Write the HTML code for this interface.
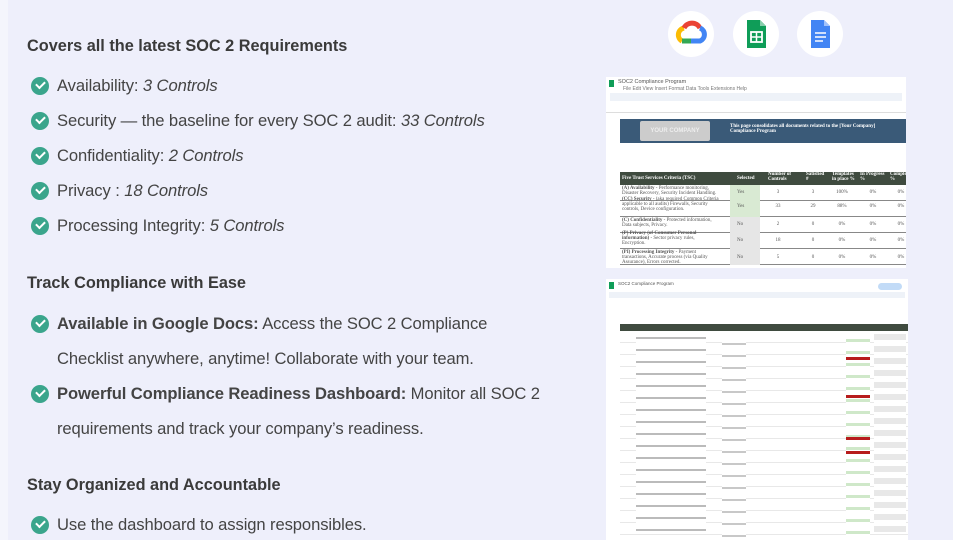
<!DOCTYPE html>
<html><head><meta charset="utf-8"><style>
*{margin:0;padding:0;box-sizing:border-box}
body{width:960px;height:540px;overflow:hidden;background:#fff;font-family:"Liberation Sans",sans-serif;position:relative}
.bg{position:absolute;left:0;top:0;width:953px;height:540px;background:#eeeffb}
.strip{position:absolute;left:0;top:0;width:8px;height:540px;background:#f4f5fc}
h2{position:absolute;left:27px;font-size:16.3px;font-weight:bold;color:#3a3a3a}
.it{position:absolute;left:57px;font-size:16.6px;color:#444;white-space:nowrap;letter-spacing:-0.1px}
.ck{position:absolute;left:31px;width:18px;height:18px;border-radius:50%;background:#3aa58c}
.ck:after{content:"";position:absolute;left:5px;top:4px;width:7px;height:4px;border-left:2px solid #fff;border-bottom:2px solid #fff;transform:rotate(-45deg)}
.ic{position:absolute;top:11px;width:46px;height:46px;border-radius:50%;background:#fff}
.sheet{position:absolute;background:#fff;overflow:hidden;font-size:5px;color:#555}
.r{position:absolute;left:0;right:0}
.num{position:absolute;text-align:center;width:20px}
</style></head><body>
<div class="bg"></div><div class="strip"></div>

<h2 style="top:37px">Covers all the latest SOC 2 Requirements</h2>
<div class="ck" style="top:77px"></div><div class="it" style="top:76px">Availability: <i>3 Controls</i></div>
<div class="ck" style="top:112px"></div><div class="it" style="top:111px">Security — the baseline for every SOC 2 audit: <i>33 Controls</i></div>
<div class="ck" style="top:147px"></div><div class="it" style="top:146px">Confidentiality: <i>2 Controls</i></div>
<div class="ck" style="top:182px"></div><div class="it" style="top:181px">Privacy : <i>18 Controls</i></div>
<div class="ck" style="top:217px"></div><div class="it" style="top:216px">Processing Integrity: <i>5 Controls</i></div>

<h2 style="top:274px">Track Compliance with Ease</h2>
<div class="ck" style="top:315px"></div><div class="it" style="top:314px"><b>Available in Google Docs:</b> Access the SOC 2 Compliance</div>
<div class="it" style="top:349px">Checklist anywhere, anytime! Collaborate with your team.</div>
<div class="ck" style="top:385px"></div><div class="it" style="top:384px"><b>Powerful Compliance Readiness Dashboard:</b> Monitor all SOC 2</div>
<div class="it" style="top:419px">requirements and track your company’s readiness.</div>

<h2 style="top:476px">Stay Organized and Accountable</h2>
<div class="ck" style="top:516px"></div><div class="it" style="top:515px">Use the dashboard to assign responsibles.</div>

<div class="ic" style="left:668px"><svg width="46" height="46" viewBox="0 0 46 46"><path d="M14 30a7 7 0 0 1 2-13" stroke="#fbbc04" stroke-width="5" fill="none"/><path d="M16 17a9 9 0 0 1 16 0" stroke="#ea4335" stroke-width="5" fill="none"/><path d="M32 17a7 7 0 0 1 0 13H23" stroke="#4285f4" stroke-width="5" fill="none"/><path d="M14 30h9" stroke="#34a853" stroke-width="5"/></svg></div>
<div class="ic" style="left:733px"><svg width="46" height="46" viewBox="0 0 46 46"><path d="M14 9h13l6 6v22H14z" fill="#0f9d58"/><path d="M27 9v6h6z" fill="#87ceac"/><rect x="18" y="21" width="11" height="10" fill="none" stroke="#fff" stroke-width="1.8"/><path d="M18 26h11M23.5 21v10" stroke="#fff" stroke-width="1.5"/></svg></div>
<div class="ic" style="left:797px"><svg width="46" height="46" viewBox="0 0 46 46"><path d="M14 9h13l6 6v22H14z" fill="#4285f4"/><path d="M27 9v6h6z" fill="#a1c2fa"/><path d="M18 22h11M18 26h11M18 30h8" stroke="#fff" stroke-width="1.6"/></svg></div>

<div class="sheet" style="left:606px;top:77px;width:300px;height:191px">
 <div class="r" style="top:2px;left:12px;font-size:5.5px">SOC2 Compliance Program</div>
 <div style="position:absolute;left:3px;top:3px;width:5px;height:7px;background:#0f9d58"></div>
 <div class="r" style="top:9px;left:17px;color:#777">File Edit View Insert Format Data Tools Extensions Help</div>
 <div class="r" style="top:16px;height:8px;background:#eef2f8;left:4px;right:4px"></div>
 <div class="r" style="top:31px;height:5px;border-bottom:1px solid #ddd"></div>
 <div class="r" style="top:42px;left:14px;height:24px;background:#3a5a78;color:#fff;font-size:5px;font-weight:bold">
  <div style="position:absolute;left:20px;top:2px;width:70px;height:20px;background:#ccc;border-radius:2px;color:#eee;text-align:center;line-height:20px;font-size:6px">YOUR COMPANY</div>
  <div style="position:absolute;left:110px;top:5px;font-family:'Liberation Serif',serif">This page consolidates all documents related to the [Your Company]<br>Compliance Program</div>
 </div>
 <div class="r" style="top:95px;left:14px;height:13px;background:#3f4b3f;color:#fff;font-family:'Liberation Serif',serif;font-weight:bold">
  <span style="position:absolute;left:2px;top:4px">Five Trust Services Criteria (TSC)</span>
  <span style="position:absolute;left:117px;top:4px">Selected</span>
  <span style="position:absolute;left:148px;top:0">Number of<br>Controls</span>
  <span style="position:absolute;left:186px;top:0">Satisfied<br>#</span>
  <span style="position:absolute;left:212px;top:0">Templates<br>in place %</span>
  <span style="position:absolute;left:240px;top:0">In Progress<br>%</span>
  <span style="position:absolute;left:270px;top:0">Completed<br>%</span>
 </div>
 <div class="r" style="top:108px;left:14px;height:80px;font-family:'Liberation Serif',serif;background:repeating-linear-gradient(#fff 0 15px,#888 15px 16px)">
  <div style="position:absolute;left:110px;top:0;width:30px;height:32px;background:#d9ead3"></div>
  <div style="position:absolute;left:110px;top:32px;width:30px;height:48px;background:#e6e6e6"></div>
  <div style="position:absolute;left:2px;top:1px;background:#fff"><b>(A) Availability</b> - Performance monitoring,<br>Disaster Recovery, Security Incident Handling.</div>
  <div style="position:absolute;left:2px;top:12px"><b>(CC) Security</b> - (aka required Common Criteria<br>applicable to all audits) Firewalls, Security<br>controls, Device configuration.</div>
  <div style="position:absolute;left:2px;top:33px"><b>(C) Confidentiality</b> - Protected information,<br>Data subjects, Privacy.</div>
  <div style="position:absolute;left:2px;top:46px"><b>(P) Privacy (of Consumer Personal<br>information)</b> - Sector privacy rules,<br>Encryption.</div>
  <div style="position:absolute;left:2px;top:65px"><b>(PI) Processing Integrity</b> - Payment<br>transactions, Accurate process (via Quality<br>Assurance), Errors corrected.</div>
  <div style="position:absolute;left:117px;top:5px">Yes</div><div style="position:absolute;left:117px;top:19px">Yes</div>
  <div style="position:absolute;left:117px;top:37px">No</div><div style="position:absolute;left:117px;top:53px">No</div><div style="position:absolute;left:117px;top:70px">No</div>
  <div class="num" style="left:148px;top:5px">3</div><div class="num" style="left:148px;top:19px">33</div><div class="num" style="left:148px;top:37px">2</div><div class="num" style="left:148px;top:53px">18</div><div class="num" style="left:148px;top:70px">5</div>
  <div class="num" style="left:183px;top:5px">3</div><div class="num" style="left:183px;top:19px">29</div><div class="num" style="left:183px;top:37px">0</div><div class="num" style="left:183px;top:53px">0</div><div class="num" style="left:183px;top:70px">0</div>
  <div class="num" style="left:212px;top:5px">100%</div><div class="num" style="left:212px;top:19px">88%</div><div class="num" style="left:212px;top:37px">0%</div><div class="num" style="left:212px;top:53px">0%</div><div class="num" style="left:212px;top:70px">0%</div>
  <div class="num" style="left:243px;top:5px">0%</div><div class="num" style="left:243px;top:19px">0%</div><div class="num" style="left:243px;top:37px">0%</div><div class="num" style="left:243px;top:53px">0%</div><div class="num" style="left:243px;top:70px">0%</div>
  <div class="num" style="left:271px;top:5px">0%</div><div class="num" style="left:271px;top:19px">0%</div><div class="num" style="left:271px;top:37px">0%</div><div class="num" style="left:271px;top:53px">0%</div><div class="num" style="left:271px;top:70px">0%</div>
 </div>
</div>

<div class="sheet" style="left:606px;top:279px;width:302px;height:261px">
 <div style="position:absolute;left:3px;top:3px;width:5px;height:7px;background:#0f9d58"></div>
 <div class="r" style="top:2px;left:12px;font-size:4.5px">SOC2 Compliance Program</div>
 <div style="position:absolute;left:272px;top:4px;width:24px;height:7px;border-radius:4px;background:#c2dbf7"></div>
 <div class="r" style="top:13px;height:6px;background:#eef2f8;left:3px;right:3px"></div>
 <div class="r" style="top:45px;left:14px;height:7px;background:#3f4b3f"></div>
 <div style="position:absolute;left:14px;top:52px;width:288px;height:209px;background:repeating-linear-gradient(#fff 0 11px,#e8e8e8 11px 12px)"></div>
 <div style="position:absolute;left:116px;top:60px;width:24px;height:200px;background:repeating-linear-gradient(#fff 0 4px,#c8c8c8 4px 6px,#fff 6px 12px)"></div>
 <div style="position:absolute;left:240px;top:58px;width:24px;height:200px;background:repeating-linear-gradient(#fff 0 2px,#cfe8c9 2px 5px,#fff 5px 12px)"></div>
 <div style="position:absolute;left:240px;top:78px;width:24px;height:3px;background:#b71c1c"></div>
 <div style="position:absolute;left:240px;top:116px;width:24px;height:3px;background:#b71c1c"></div>
 <div style="position:absolute;left:240px;top:158px;width:24px;height:3px;background:#b71c1c"></div>
 <div style="position:absolute;left:240px;top:172px;width:24px;height:3px;background:#b71c1c"></div>
 <div style="position:absolute;left:268px;top:55px;width:32px;height:200px;background:repeating-linear-gradient(#e8e8e8 0 6px,#fff 6px 12px)"></div>
 <div style="position:absolute;left:30px;top:55px;width:70px;height:200px;background:repeating-linear-gradient(#fff 0 3px,#bbb 3px 5px,#fff 5px 12px)"></div>
</div>
</body></html>
